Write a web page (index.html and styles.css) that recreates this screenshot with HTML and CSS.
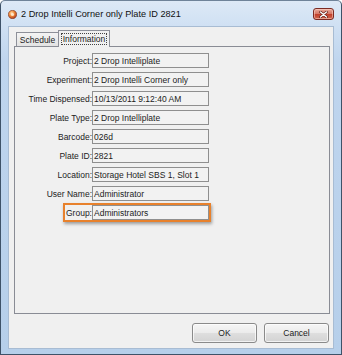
FILE: index.html
```html
<!DOCTYPE html>
<html lang="en">
<head>
    <meta charset="UTF-8">
    <title>2 Drop Intelli Corner only Plate ID 2821</title>
    <link rel="stylesheet" href="styles.css">
</head>
<body>
    <div class="window">
        <div class="titlebar">
            <svg class="app-icon" width="9" height="9" viewBox="0 0 9 9">
                <defs>
                    <radialGradient id="ic" cx="0.4" cy="0.35" r="0.7">
                        <stop offset="0" stop-color="#ffe0b0"/>
                        <stop offset="0.45" stop-color="#f08a3a"/>
                        <stop offset="1" stop-color="#a8321c"/>
                    </radialGradient>
                </defs>
                <circle cx="4.5" cy="4.5" r="4.2" fill="url(#ic)" stroke="#7a3a2a" stroke-width="0.6"/>
                <circle cx="4.5" cy="4.5" r="1.6" fill="#fff3e0" opacity="0.8"/>
            </svg>
            <span class="title">2 Drop Intelli Corner only Plate ID 2821</span>
            <div class="close-btn">
                <svg width="9" height="7" viewBox="0 0 9 7">
                    <path d="M1.5 1 L7.5 6 M7.5 1 L1.5 6" stroke="#5a1a14" stroke-width="2.6" stroke-linecap="round"/>
                    <path d="M1.5 1 L7.5 6 M7.5 1 L1.5 6" stroke="#ffffff" stroke-width="1.4" stroke-linecap="round"/>
                </svg>
            </div>
        </div>

        <div class="client">
            <div class="tabs">
                <div class="tab">Schedule</div>
                <div class="tab active"><span class="focus">Information</span></div>
            </div>

            <div class="panel">
                <div class="form">
                    <div class="row"><span class="label">Project:</span><span class="box">2 Drop Intelliplate</span></div>
                    <div class="row"><span class="label">Experiment:</span><span class="box">2 Drop Intelli Corner only</span></div>
                    <div class="row"><span class="label">Time Dispensed:</span><span class="box">10/13/2011 9:12:40 AM</span></div>
                    <div class="row"><span class="label">Plate Type:</span><span class="box">2 Drop Intelliplate</span></div>
                    <div class="row"><span class="label">Barcode:</span><span class="box">026d</span></div>
                    <div class="row"><span class="label">Plate ID:</span><span class="box">2821</span></div>
                    <div class="row"><span class="label">Location:</span><span class="box">Storage Hotel SBS 1, Slot 1</span></div>
                    <div class="row"><span class="label">User Name:</span><span class="box">Administrator</span></div>
                    <div class="row highlight"><span class="label">Group:</span><span class="box">Administrators</span></div>
                </div>
            </div>

            <div class="buttons">
                <div class="btn">OK</div>
                <div class="btn">Cancel</div>
            </div>
        </div>
    </div>
</body>
</html>
```

FILE: styles.css
```css
/* Windows 7 style dialog */
:root {
    --frame: #bfd5ee;
    --dialog-bg: #f0f0f0;
    --text: #1c1c1c;
    --border-gray: #8e8f8f;
    --highlight: #e8812c;
}

* {
    margin: 0;
    padding: 0;
    box-sizing: border-box;
}

body {
    font-family: 'Liberation Sans', Arial, sans-serif;
    font-size: 8.5px;
    color: var(--text);
    background-color: #ffffff;
}

.window {
    width: 342px;
    height: 355px;
    border: 1px solid #3e5268;
    border-top-color: #6f8399;
    border-radius: 5px 5px 0 0;
    background: linear-gradient(to bottom, #dde9f6 0px, #cfe0f3 26px, var(--frame) 60px, #b6cfea 100%);
    padding: 0 7px 6px 7px;
    display: flex;
    flex-direction: column;
}

.titlebar {
    height: 25px;
    display: flex;
    align-items: center;
    flex-shrink: 0;
}

.app-icon {
    margin-top: 1px;
    flex-shrink: 0;
}

.title {
    margin-left: 4px;
    font-size: 9.2px;
    color: #111;
    margin-top: 1px;
}

.close-btn {
    margin-left: auto;
    margin-right: 0;
    margin-top: 1px;
    width: 21px;
    height: 12px;
    border: 1px solid #7b2a22;
    border-radius: 3px;
    background: linear-gradient(to bottom, #e9a99a 0%, #d77a69 45%, #c2402c 55%, #d0644c 100%);
    display: flex;
    align-items: center;
    justify-content: center;
    box-shadow: inset 0 0 0 1px rgba(255, 220, 210, 0.5);
}

.client {
    flex: 1;
    background-color: var(--dialog-bg);
    border: 1px solid #a8bcd3;
    padding: 3px 3px 5px 5px;
    display: flex;
    flex-direction: column;
}

.tabs {
    display: flex;
    align-items: flex-end;
    padding-left: 2px;
    height: 16px;
    position: relative;
    z-index: 1;
}

.tab {
    height: 14px;
    padding: 0 4px;
    border: 1px solid #8d9099;
    border-bottom: none;
    background: linear-gradient(to bottom, #f4f4f4, #e3e3e3);
    display: flex;
    align-items: center;
    margin-bottom: 0;
    width: 43px;
    justify-content: center;
}

.tab.active {
    height: 17px;
    width: 52px;
    margin-left: -1px;
    margin-bottom: -1px;
    background: var(--dialog-bg);
    padding-bottom: 1px;
}

.focus {
    border: 1px dotted #444;
    padding: 0 1px;
    line-height: 10px;
}

.panel {
    height: 268px;
    border: 1px solid #898c95;
    background-color: var(--dialog-bg);
    padding: 6px 0 0 0;
}

.form {
    display: flex;
    flex-direction: column;
    gap: 4px;
}

.row {
    display: flex;
    align-items: center;
    position: relative;
    width: 194px;
}

.label {
    width: 77px;
    text-align: right;
    padding-right: 0;
    color: #222;
}

.box {
    width: 117px;
    height: 15px;
    border: 1px solid #8f8f8f;
    background-color: #f2f2f2;
    padding-left: 1px;
    display: flex;
    align-items: center;
    white-space: nowrap;
}

.highlight::after {
    content: '';
    position: absolute;
    left: 48px;
    right: -2px;
    top: -2px;
    bottom: -2px;
    border: 2px solid var(--highlight);
    box-shadow: 1px 2px 3px rgba(0, 0, 0, 0.35);
}

.buttons {
    margin-top: 9px;
    display: flex;
    justify-content: flex-end;
    gap: 7px;
    padding-right: 1px;
}

.btn {
    width: 65px;
    height: 20px;
    border: 1px solid #8a8a8a;
    border-radius: 3px;
    background: linear-gradient(to bottom, #f6f6f6 0%, #ebebeb 50%, #dedede 52%, #d3d3d3 100%);
    box-shadow: inset 0 0 0 1px rgba(255, 255, 255, 0.7);
    display: flex;
    align-items: center;
    justify-content: center;
}
```
